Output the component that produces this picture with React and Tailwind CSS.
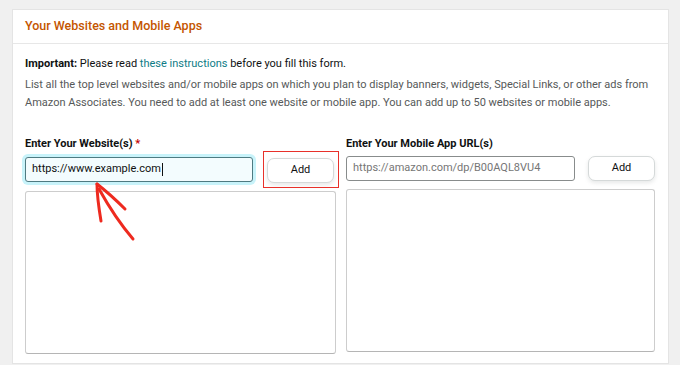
export default function App() {
  return (
    <div
      className="relative h-[365px] w-[680px] overflow-hidden bg-[#f0f0f0] pl-3 pr-[11px] pt-[9px]"
      style={{ fontFamily: 'Roboto, "Noto Sans", sans-serif' }}
    >
      <div className="h-[355px] border border-[#e4e4e4] bg-white">
        {/* Header */}
        <div className="flex h-[34px] items-center border-b border-[#e7e7e7] px-[12px]">
          <h2 className="text-[12.5px] font-medium text-[#c45500]">Your Websites and Mobile Apps</h2>
        </div>

        {/* Body */}
        <div className="px-[12px] pt-[11px]">
          <p className="text-[11px] leading-[18px] text-[#0f1111]">
            <span className="font-bold">Important:</span> Please read{' '}
            <a className="text-[#0e7c86]">these instructions</a> before you fill this form.
          </p>
          <p className="mt-[3px] text-[11px] leading-[18px] text-[#565959]">
            List all the top level websites and/or mobile apps on which you plan to display banners, widgets, Special Links, or other ads from Amazon Associates. You need to add at least one website or mobile app. You can add up to 50 websites or mobile apps.
          </p>

          <div className="mt-[24px] grid grid-cols-2 gap-[11px]">
            {/* Websites */}
            <div className="relative">
              <label className="block text-[11px] font-bold leading-[16px] text-[#0f1111]">
                Enter Your Website(s) <span className="text-[#c40000]">*</span>
              </label>
              <div className="mt-[4px] flex items-center">
                <div className="flex h-[25px] w-[228px] items-center rounded-[3px] border border-[#4f7a81] bg-[#f3fcfe] px-[6px] text-[11px] text-[#0f1111] shadow-[0_0_0_3px_#c8f3fa]">
                  https://www.example.com<span className="ml-px inline-block h-[13px] w-px bg-[#0f1111]" />
                </div>
                <div className="relative ml-[14px]">
                  <button className="h-[25px] w-[67px] rounded-[7px] border border-[#d5d9d9] bg-white text-[11px] text-[#0f1111] shadow-[0_2px_4px_rgba(213,217,217,0.6)]">
                    Add
                  </button>
                  <span className="pointer-events-none absolute -bottom-[5px] -left-[4px] -right-[5px] -top-[5px] border-[1.5px] border-[#e8312a]" />
                </div>
              </div>
              <div className="mt-[8px] h-[163px] w-[311px] rounded-[3px] border border-[#cdcdcd] border-b-[#b5b5b5] bg-white" />

              {/* annotation arrow */}
              <svg className="pointer-events-none absolute left-[60px] top-[35px]" width="60" height="80" viewBox="0 0 60 80" fill="none">
                <g stroke="#ee2a1f" strokeWidth="3" strokeLinecap="round" strokeLinejoin="round">
                  <path d="M12 13 C12 26 14 38 16 50" />
                  <path d="M12 13 C21 20 31 29 40 38" />
                  <path d="M14 18 C24 36 36 54 48 68" />
                </g>
              </svg>
            </div>

            {/* Mobile apps */}
            <div>
              <label className="block text-[11px] font-bold leading-[16px] text-[#0f1111]">
                Enter Your Mobile App URL(s)
              </label>
              <div className="mt-[4px] flex items-center">
                <div className="flex h-[25px] w-[229px] items-center rounded-[3px] border border-[#888c8c] bg-white px-[6px] text-[11px] text-[#767676]">
                  https://amazon.com/dp/B00AQL8VU4
                </div>
                <button className="ml-[13px] h-[25px] w-[67px] rounded-[7px] border border-[#d5d9d9] bg-white text-[11px] text-[#0f1111] shadow-[0_2px_4px_rgba(213,217,217,0.6)]">
                  Add
                </button>
              </div>
              <div className="mt-[8px] h-[163px] w-[309px] rounded-[3px] border border-[#cdcdcd] border-b-[#b5b5b5] bg-white" />
            </div>
          </div>
        </div>
      </div>
    </div>
  )
}
